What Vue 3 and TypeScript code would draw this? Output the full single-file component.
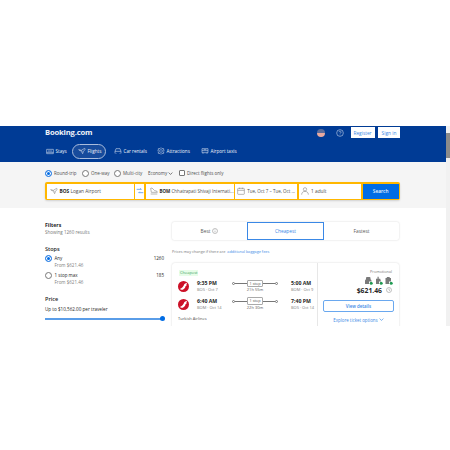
<template>
  <div class="page">
    <div class="frame">
      <div class="main">
        <header class="header">
          <div class="top">
            <div class="logo">Booking.com</div>
            <div class="top-actions">
              <span class="flag"></span>
              <svg class="help" viewBox="0 0 12 12" width="8" height="8" fill="none" stroke="#dfe7f4" stroke-width=".8">
                <circle cx="6" cy="6" r="5" />
                <path d="M4.500 4.800a1.500 1.500 0 1 1 2.300 1.200c-.5.300-.8.600-.8 1.200M6 8.400v.8" />
              </svg>
              <button class="btn-top btn-top--reg">Register</button>
              <button class="btn-top">Sign in</button>
            </div>
          </div>
          <nav class="nav">
            <a v-for="item in navItems" :key="item.label" class="nav-item" :class="{ 'nav-item--active': item.active }">
              <svg viewBox="0 0 12 12" width="8" height="8" fill="none" stroke="#e6ecf6" stroke-width=".8" stroke-linejoin="round">
                <path :d="item.icon" />
              </svg>
              {{ item.label }}
            </a>
          </nav>
        </header>

        <section class="search">
          <div class="trip-row">
            <label class="radio-line radio-line--round"><span class="radio radio--big radio--on"></span>Round-trip</label>
            <label class="radio-line radio-line--one"><span class="radio radio--big"></span>One-way</label>
            <label class="radio-line radio-line--multi"><span class="radio radio--big"></span>Multi-city</label>
            <span class="cabin">Economy
              <svg viewBox="0 0 8 8" width="5" height="5" fill="none" stroke="#333" stroke-width="1"><path d="M1 2.500l3 3 3-3" /></svg>
            </span>
            <label class="radio-line"><span class="check"></span>Direct flights only</label>
          </div>
          <div class="search-bar">
            <div class="field field--from">
              <svg viewBox="0 0 12 12" width="8" height="8" fill="none" stroke="#777" stroke-width=".8"><path d="M1 4l4 1 5-3 1 1-3 4-1 3-1-1V6L3 5.500z" /></svg>
              <span><b>BOS</b> Logan Airport</span>
            </div>
            <div class="field field--swap">
              <svg viewBox="0 0 12 12" width="8" height="8" fill="none" stroke="#2f82e4" stroke-width="1"><path d="M1 3.500h7M6.500 2L8 3.500M11 8.500H4M5.500 7L4 8.500" /></svg>
            </div>
            <div class="field field--to">
              <svg viewBox="0 0 12 12" width="8" height="8" fill="none" stroke="#777" stroke-width=".8"><path d="M1 2l2-.5 4 4 3 .5 1 2-9 0zM1 10.500h10" /></svg>
              <span class="nowrap"><b>BOM</b> Chhatrapati Shivaji Internati...</span>
            </div>
            <div class="field field--date">
              <svg viewBox="0 0 12 12" width="8" height="8" fill="none" stroke="#777" stroke-width=".8"><rect x="1" y="2" width="10" height="9" rx="1" /><path d="M1 5h10M4 1v2M8 1v2" /></svg>
              <span class="nowrap">Tue, Oct 7 – Tue, Oct ...</span>
            </div>
            <div class="field field--people">
              <svg viewBox="0 0 12 12" width="8" height="8" fill="none" stroke="#777" stroke-width=".8"><circle cx="6" cy="3.500" r="2.500" /><path d="M1 11.500c0-3 2-5 5-5s5 2 5 5" /></svg>
              <span>1 adult</span>
            </div>
            <button class="search-btn">Search</button>
          </div>
        </section>

        <section class="content">
          <aside class="filters">
            <div class="f-title">Filters</div>
            <div class="f-sub">Showing 1260 results</div>
            <div class="f-head">Stops</div>
            <div v-for="stop in stops" :key="stop.label" class="stop">
              <span class="radio radio--big" :class="{ 'radio--on': stop.on }"></span>
              <div class="stop-text">
                <div class="stop-label">{{ stop.label }}</div>
                <div class="stop-from">From $621.46</div>
              </div>
              <span class="stop-count">{{ stop.count }}</span>
            </div>
            <div class="f-head f-head--price">Price</div>
            <div class="price-up">Up to $10,562.00 per traveler</div>
            <div class="slider"><span class="thumb"></span></div>
          </aside>

          <div class="results">
            <div class="tabs">
              <div class="tab">Best
                <svg viewBox="0 0 12 12" width="6" height="6" fill="none" stroke="#777" stroke-width=".9"><circle cx="6" cy="6" r="5" /><path d="M6 5.500v3M6 3.200v1" /></svg>
              </div>
              <div class="tab tab--active">Cheapest</div>
              <div class="tab">Fastest</div>
            </div>
            <div class="notice">Prices may change if there are <a>additional baggage fees</a></div>
            <div class="card">
              <div class="card-left">
                <span class="tag">Cheapest</span>
                <div v-for="leg in legs" :key="leg.dep" class="leg">
                  <svg class="airline" viewBox="0 0 12 12" width="11" height="11">
                    <circle cx="6" cy="6" r="6" fill="#cc1128" />
                    <path d="M2 8.600C4.200 8.200 6 6.400 7 3.400 8 2.600 9 2.100 10.200 1.900 9.300 3 9 4 9.400 5L8.200 5.600C7.900 7.800 6 9.600 3.600 9.600z" fill="#fff" />
                  </svg>
                  <div class="time-block">
                    <div class="time">{{ leg.dep }}</div>
                    <div class="place">{{ leg.from }}</div>
                  </div>
                  <div class="route">
                    <div class="line">
                      <span class="dot"></span><span class="bar"></span>
                      <span class="stop-pill">1 stop</span>
                      <span class="bar"></span><span class="dot"></span>
                    </div>
                    <div class="dur">{{ leg.dur }}</div>
                  </div>
                  <div class="time-block time-block--end">
                    <div class="time">{{ leg.arr }}</div>
                    <div class="place">{{ leg.to }}</div>
                  </div>
                </div>
                <div class="airline-name">Turkish Airlines</div>
              </div>
              <div class="card-right">
                <div class="promo">Promotional</div>
                <div class="bags">
                  <svg v-for="bag in bags" :key="bag" viewBox="0 0 9 9" width="9" height="9">
                    <path :d="bag" fill="#7a7a7a" />
                    <circle cx="7.200" cy="7.200" r="1.500" fill="#1f9a52" />
                  </svg>
                </div>
                <div class="price">$621.46
                  <svg viewBox="0 0 12 12" width="6" height="6" fill="none" stroke="#777" stroke-width=".9"><circle cx="6" cy="6" r="5" /><path d="M6 6V3M6 6l2 1.500" /></svg>
                </div>
                <button class="details">View details</button>
                <div class="explore">Explore ticket options
                  <svg viewBox="0 0 8 8" width="5" height="5" fill="none" stroke="#2f82e4" stroke-width="1"><path d="M1 2.500l3 3 3-3" /></svg>
                </div>
              </div>
            </div>
          </div>
        </section>
      </div>
      <div class="scrollbar"><span class="scroll-thumb"></span></div>
    </div>
  </div>
</template>

<script setup lang="ts">
type NavItem = { label: string; icon: string; active?: boolean }

const navItems: NavItem[] = [
  { label: 'Stays', icon: 'M1 10V3.500h10V10M1 8h10M3 6h6M1 10h10' },
  { label: 'Flights', icon: 'M1 4l4 1 5-3 1 1-3 4-1 3-1-1V6L3 5.500z', active: true },
  { label: 'Car rentals', icon: 'M1.500 9.500V6.500L3 2.500h6l1.500 4v3M1.500 6.500h9M3 9.500v1M9 9.500v1' },
  { label: 'Attractions', icon: 'M6 1l1.500 1.500H10V5l1 1-1 1v2.500H7.500L6 11 4.500 9.500H2V7L1 6l1-1V2.500h2.500zM6 4a2 2 0 1 0 .01 0' },
  { label: 'Airport taxis', icon: 'M1.500 2.500h9v6h-9zM1.500 5.500h9M3 8.500v1.500M9 8.500v1.500M4 4h4' },
]

const stops = [
  { label: 'Any', count: 1260, on: true },
  { label: '1 stop max', count: 185, on: false },
]

const legs = [
  { dep: '9:35 PM', from: 'BOS · Oct 7', dur: '21h 55m', arr: '5:00 AM', to: 'BOM · Oct 9' },
  { dep: '6:40 AM', from: 'BOM · Oct 14', dur: '22h 30m', arr: '7:40 PM', to: 'BOS · Oct 14' },
]

const bags = [
  'M3 1h2.500a1 1 0 0 1 1 1v1.200A2 2 0 0 1 7.500 5v.5H5V8H1.500a.5.5 0 0 1-.5-.5V5a2 2 0 0 1 1-1.800V2a1 1 0 0 1 1-1z',
  'M3.500 .8h1.200v2h1.500l.8 2.700H5V8H2V2.800h1.500z',
  'M2.800 1h2.900v1H7v3.500H5V8H1.500V2h1.300z',
]
</script>

<style>
html,
body {
  margin: 0;
  background: #fff;
}
</style>

<style scoped>
.page {
  width: 450px;
  height: 450px;
  padding-top: 126px;
  box-sizing: border-box;
  background: #fff;
  font-family: "Open Sans", "Noto Sans", sans-serif;
  color: #262626;
}

.frame {
  position: relative;
  height: 200px;
  overflow: hidden;
}

.main {
  width: 446px;
}

.header {
  background: #003b95;
  height: 36px;
  padding: 0 46px 0 45px;
  color: #f0f4fa;
  box-sizing: border-box;
}

.top {
  display: flex;
  justify-content: space-between;
  align-items: flex-start;
  height: 15px;
}

.logo {
  font-size: 7.600px;
  font-weight: 700;
  letter-spacing: -0.15px;
  line-height: 12px;
}

.top-actions {
  display: flex;
  align-items: center;
  margin-top: 1px;
  height: 11px;
}

.flag {
  width: 8px;
  height: 8px;
  border-radius: 50%;
  background: linear-gradient(#5a6c9c 50%, #e8a9a0 50%);
  margin-right: 11px;
}

.help {
  margin-right: 7px;
}

.btn-top {
  height: 11px;
  border: 0;
  padding: 0;
  margin-left: 3.500px;
  background: #fff;
  color: #3a88e6;
  font: 500 4.800px "Open Sans", sans-serif;
  width: 22px;
  white-space: nowrap;
}

.btn-top--reg {
  width: 24px;
  margin-left: 0;
}

.nav {
  display: flex;
  align-items: center;
  margin-top: 2px;
  height: 16px;
}

.nav-item {
  display: flex;
  align-items: center;
  gap: 1.500px;
  font-size: 4.600px;
  height: 15px;
  border: 0.5px solid transparent;
  border-radius: 8px;
  box-sizing: border-box;
  white-space: nowrap;
  width: 44px;
}

.nav-item:first-child {
  width: 27px;
}

.nav-item:nth-child(3) {
  width: 43px;
}

.nav-item--active {
  width: 34px;
  margin-right: 7px;
  padding-left: 5px;
  border-color: #a9bcdc;
  background: #174b9c;
}

.search {
  background: #f5f5f5;
  height: 46px;
  padding: 0 46px 0 45px;
  box-sizing: border-box;
}

.trip-row {
  display: flex;
  align-items: center;
  height: 20px;
  padding-top: 2px;
  box-sizing: border-box;
  font-size: 4.500px;
  color: #4d4d4d;
}

.radio-line {
  display: flex;
  align-items: center;
  gap: 2px;
  white-space: nowrap;
}

.radio-line--round {
  width: 37px;
}

.radio-line--one {
  width: 32px;
}

.radio-line--multi {
  width: 34px;
}

.radio {
  width: 6px;
  height: 6px;
  border-radius: 50%;
  border: 0.5px solid #777;
  background: #fff;
  box-sizing: border-box;
  flex: none;
}

.radio--on {
  border: 1px solid #2f82e4;
  background: #006ce4;
  box-shadow: inset 0 0 0 1px #fff;
}

.radio--big {
  width: 7px;
  height: 7px;
}

.cabin {
  display: flex;
  align-items: center;
  gap: 1px;
  width: 31px;
  white-space: nowrap;
}

.check {
  width: 6px;
  height: 6px;
  border: 0.5px solid #777;
  background: #fff;
  box-sizing: border-box;
  border-radius: 1px;
}

.search-bar {
  display: flex;
  height: 18px;
  background: #ffb700;
  border-radius: 2px;
  padding: 1.500px;
  gap: 1.750px;
  box-sizing: border-box;
  width: 355px;
  box-shadow: 0 1px 2px rgba(0, 0, 0, 0.15);
}

.field {
  display: flex;
  align-items: center;
  gap: 2px;
  background: #fff;
  padding-left: 3px;
  font-size: 4.800px;
  color: #4d4d4d;
  box-sizing: border-box;
  min-width: 0;
}

.field b {
  color: #262626;
}

.field svg {
  flex: none;
}

.field--from { width: 87px; }
.field--swap { width: 8.500px; padding-left: 0.250px; }
.field--to { width: 88px; padding-left: 4px; font-size: 4.500px; }
.field--date { width: 62px; padding-left: 2px; font-size: 4.500px; }
.field--people { width: 62px; padding-left: 2px; }

.nowrap {
  white-space: nowrap;
}

.search-btn {
  flex: 1;
  border: 0;
  background: #006ce4;
  color: #e8f1fc;
  font: 600 4.800px "Open Sans", sans-serif;
  padding: 0;
}

.content {
  display: flex;
  padding: 14px 46px 0 45px;
}

.filters {
  width: 120px;
  margin-right: 7px;
  flex: none;
}

.f-title {
  font-size: 5.200px;
  font-weight: 700;
  line-height: 7px;
}

.f-sub {
  font-size: 4.500px;
  color: #777;
  line-height: 7px;
}

.f-head {
  font-size: 5.500px;
  font-weight: 600;
  margin-top: 10px;
  margin-bottom: 2px;
  line-height: 7px;
}

.f-head--price {
  margin-top: 11px;
  margin-bottom: 3px;
}

.stop {
  display: flex;
  margin-bottom: 4px;
  gap: 2.500px;
  font-size: 4.500px;
}

.stop-text {
  flex: 1;
  line-height: 6.500px;
}

.stop-from {
  color: #808080;
}

.stop-count {
  line-height: 6.500px;
  padding-right: 1px;
}

.price-up {
  font-size: 4.600px;
  font-weight: 500;
  line-height: 7px;
}

.slider {
  position: relative;
  margin-top: 5px;
  width: 118px;
  height: 1.500px;
  background: #5a9de8;
}

.thumb {
  position: absolute;
  right: -2px;
  top: -1.750px;
  width: 5px;
  height: 5px;
  border-radius: 50%;
  background: #006ce4;
}

.results {
  width: 227px;
  flex: none;
}

.tabs {
  display: flex;
  height: 17.500px;
  border-radius: 2px;
  box-shadow: 0 0 2px rgba(0, 0, 0, 0.18);
  background: #fff;
}

.tab {
  flex: 1;
  display: flex;
  align-items: center;
  justify-content: center;
  gap: 2px;
  font-size: 4.800px;
  color: #595959;
}

.tab--active {
  border: 1px solid #3a88e6;
  color: #3a88e6;
  box-sizing: border-box;
}

.notice {
  font-size: 3.800px;
  color: #777;
  margin: 8px 0 8px;
  line-height: 7px;
}

.notice a {
  color: #3a88e6;
  margin-left: 1px;
}

.card {
  display: flex;
  border-radius: 3px;
  box-shadow: 0 0 2px rgba(0, 0, 0, 0.18);
  background: #fff;
  height: 70px;
}

.card-left {
  width: 146px;
  flex: none;
  box-sizing: border-box;
  padding: 7px 0 0 6px;
  border-right: 0.5px solid #e7e7e7;
}

.tag {
  display: block;
  width: fit-content;
  margin-left: 1px;
  font-size: 4px;
  color: #3aa060;
  background: #e7fde9;
  padding: 0 1px;
  line-height: 6px;
}

.leg {
  display: flex;
  align-items: center;
  height: 17.800px;
}

.tag + .leg {
  margin-top: 2px;
}

.airline {
  flex: none;
  margin-right: 8px;
}

.time-block {
  width: 35px;
  flex: none;
}

.time-block--end {
  width: 22px;
  margin-left: 13px;
}

.time {
  font-size: 5.200px;
  font-weight: 700;
  line-height: 7px;
  white-space: nowrap;
}

.place {
  font-size: 4px;
  color: #808080;
  line-height: 6px;
  white-space: nowrap;
}

.route {
  width: 46px;
  flex: none;
  text-align: center;
}

.line {
  display: flex;
  align-items: center;
  height: 7px;
}

.dot {
  width: 3px;
  height: 3px;
  border-radius: 50%;
  border: 0.5px solid #777;
  box-sizing: border-box;
  flex: none;
}

.bar {
  flex: 1;
  height: 0.5px;
  background: #777;
}

.stop-pill {
  font-size: 3.800px;
  line-height: 5.500px;
  border: 0.5px solid #aaa;
  border-radius: 1px;
  padding: 0 2px;
  white-space: nowrap;
  color: #4d4d4d;
}

.dur {
  font-size: 4px;
  line-height: 6px;
  color: #595959;
}

.airline-name {
  font-size: 4px;
  color: #4d4d4d;
  line-height: 6px;
  margin-top: 3px;
}

.card-right {
  width: 81px;
  padding: 6.500px 5px 0;
  box-sizing: border-box;
  flex: none;
  text-align: right;
}

.promo {
  font-size: 3.800px;
  color: #777;
  line-height: 6px;
  padding-right: 2px;
}

.bags {
  display: flex;
  justify-content: flex-end;
  gap: 1px;
  padding-right: 1px;
  height: 10px;
  align-items: center;
}

.price {
  display: flex;
  align-items: center;
  justify-content: flex-end;
  gap: 4px;
  font-size: 6.800px;
  font-weight: 700;
  line-height: 9px;
  padding-right: 2px;
  margin-top: 0.500px;
}

.details {
  display: block;
  width: 71px;
  height: 12px;
  margin-top: 5.500px;
  padding: 0;
  border: 0.8px solid #6aa8ef;
  border-radius: 2px;
  background: #fff;
  color: #3a88e6;
  font: 600 4.400px "Open Sans", sans-serif;
}

.explore {
  font-size: 4.400px;
  color: #3a88e6;
  text-align: center;
  margin-top: 5px;
  font-weight: 500;
}

.scrollbar {
  position: absolute;
  right: 0;
  top: 0;
  bottom: 0;
  width: 4px;
  background: #f1f1f1;
}

.scroll-thumb {
  display: block;
  margin-top: 7px;
  height: 25px;
  background: #8a8a8a;
}
</style>
